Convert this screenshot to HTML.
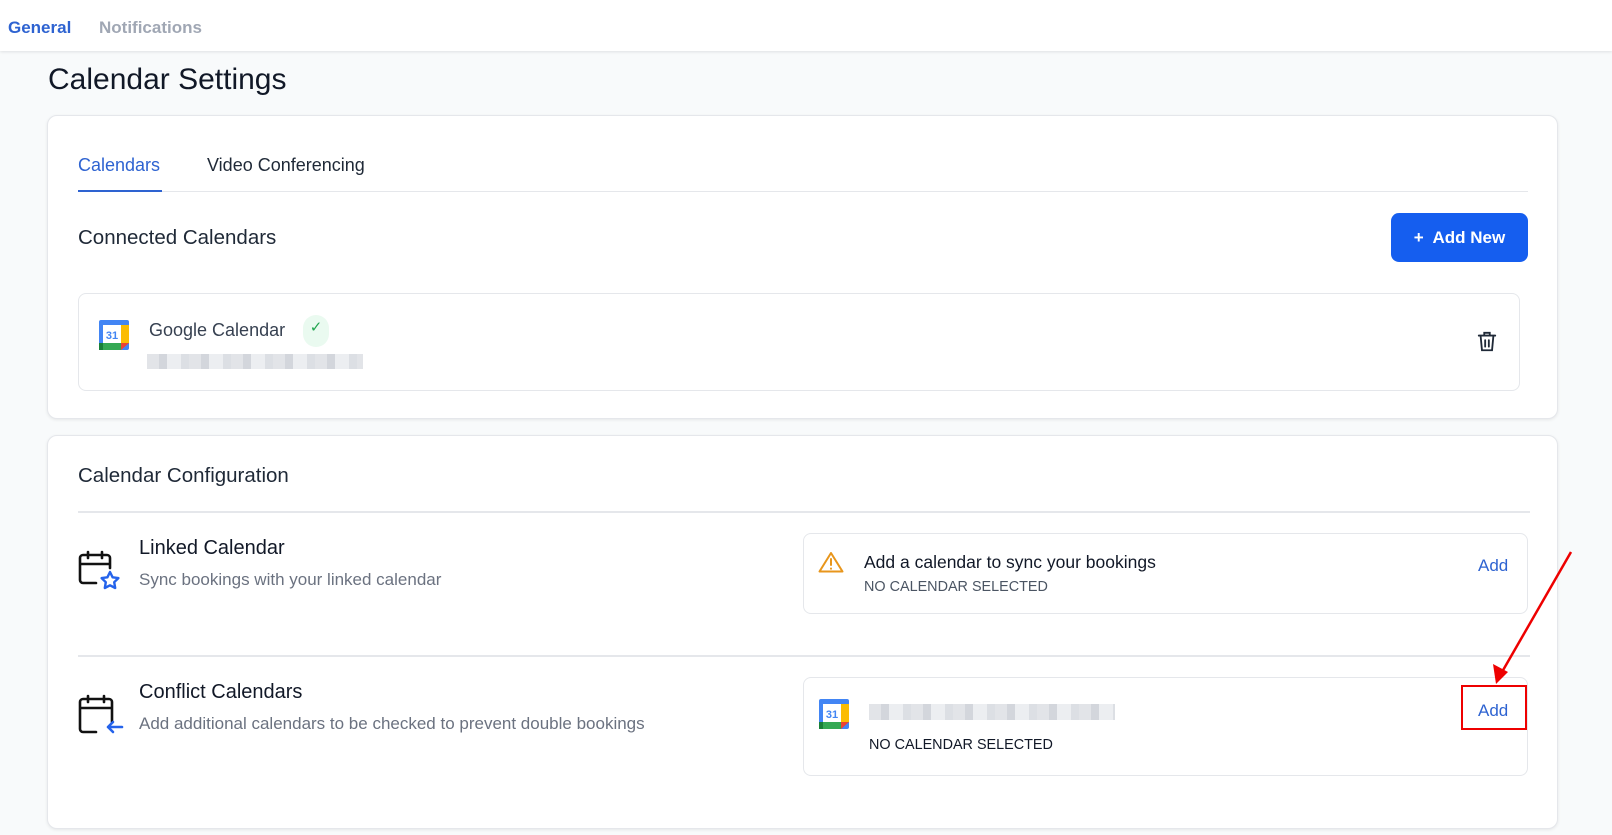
<!DOCTYPE html>
<html><head><meta charset="utf-8"><style>
*{box-sizing:border-box;margin:0;padding:0}
body{width:1612px;height:835px;background:#f8fafb;font-family:"Liberation Sans",sans-serif;position:relative;overflow:hidden;color:#111827}
.a{position:absolute;white-space:nowrap}
.card{position:absolute;background:#fff;border:1px solid #e5e7eb;border-radius:10px;box-shadow:0 1px 3px rgba(0,0,0,.08)}
.box{position:absolute;background:#fff;border:1px solid #e5e7eb;border-radius:8px}
.blur{position:absolute;background:repeating-linear-gradient(90deg,#e2e4e8 0 12px,#d3d6dc 12px 20px,#eceef1 20px 34px,#dcdfe4 34px 42px)}
</style></head><body>
<div class="a" style="left:0;top:0;width:1612px;height:51px;background:#fff;box-shadow:0 1px 3px rgba(0,0,0,.1)"></div>
<div class="a" style="left:8px;top:18px;font-size:17px;font-weight:bold;color:#2e63d1">General</div>
<div class="a" style="left:99px;top:18px;font-size:17px;font-weight:bold;color:#a0a7b4">Notifications</div>
<div class="a" style="left:48px;top:63px;font-size:30px;color:#111827">Calendar Settings</div>

<div class="card" style="left:47px;top:115px;width:1511px;height:304px"></div>
<div class="a" style="left:78px;top:155px;font-size:18px;color:#2e63d1">Calendars</div>
<div class="a" style="left:207px;top:155px;font-size:18px;color:#1f2937">Video Conferencing</div>
<div class="a" style="left:78px;top:191px;width:1450px;height:1px;background:#e5e7eb"></div>
<div class="a" style="left:78px;top:190px;width:84px;height:2px;background:#2e63d1"></div>
<div class="a" style="left:78px;top:226px;font-size:20.5px;color:#1f2937">Connected Calendars</div>
<div class="a" style="left:1391px;top:213px;width:137px;height:49px;background:#155eef;border-radius:8px;color:#fff;font-size:17px;font-weight:bold;line-height:49px;text-align:center">+&nbsp; Add New</div>
<div class="box" style="left:78px;top:293px;width:1442px;height:98px"></div>
<svg class="a" style="left:99px;top:320px" width="30" height="30" viewBox="0 0 30 30"><rect x="0" y="0" width="30" height="30" rx="2" fill="#4285f4"/><rect x="4" y="5" width="18" height="18" fill="#fff"/><rect x="22" y="5" width="8" height="18" fill="#fbbc04"/><rect x="0" y="23" width="22" height="7" fill="#34a853"/><rect x="0" y="23" width="4" height="7" fill="#188038"/><polygon points="22,23 30,23 22,30" fill="#ea4335"/><text x="13" y="19" font-size="11" font-weight="bold" fill="#4285f4" text-anchor="middle" font-family="Liberation Sans">31</text></svg>
<div class="a" style="left:149px;top:320px;font-size:18px;color:#374151">Google Calendar</div>
<div class="a" style="left:303px;top:315px;width:26px;height:32px;border-radius:13px;background:#eafaf0;color:#22a550;font-size:15px;text-align:center;line-height:26px">✓</div>
<div class="blur" style="left:147px;top:354px;width:216px;height:15px"></div>
<svg class="a" style="left:1476px;top:331px" width="22" height="22" viewBox="0 0 22 24" fill="none" stroke="#1f2937" stroke-width="2" stroke-linecap="round"><path d="M2 5h18M8 5V2h6v3M4 5l1.5 16h11L18 5M9 10v7M13 10v7"/></svg>

<div class="card" style="left:47px;top:435px;width:1511px;height:394px"></div>
<div class="a" style="left:78px;top:464px;font-size:20.5px;color:#1f2937">Calendar Configuration</div>
<div class="a" style="left:78px;top:511px;width:1452px;height:2px;background:#e5e7eb"></div>
<svg class="a" style="left:78px;top:550px" width="46" height="42" viewBox="0 0 46 42" fill="none" stroke-linecap="round" stroke-linejoin="round"><path d="M18 33H5a3 3 0 0 1-3-3V8a3 3 0 0 1 3-3h24a3 3 0 0 1 3 3v10M2 14h30M10 2v6M24 2v6" stroke="#111" stroke-width="2.6"/><path d="M32 22l2.6 5.3 5.8.8-4.2 4.1 1 5.8-5.2-2.7-5.2 2.7 1-5.8-4.2-4.1 5.8-.8z" stroke="#2563eb" stroke-width="2.4"/></svg>
<div class="a" style="left:139px;top:537px;font-size:20px;color:#111827">Linked Calendar</div>
<div class="a" style="left:139px;top:570px;font-size:17px;color:#6b7280">Sync bookings with your linked calendar</div>
<div class="box" style="left:803px;top:533px;width:725px;height:81px"></div>
<svg class="a" style="left:818px;top:551px" width="26" height="22" viewBox="0 0 26 22" fill="none" stroke="#e8961c" stroke-width="2" stroke-linecap="round" stroke-linejoin="round"><path d="M13 2L1.5 20.5h23z"/><path d="M13 8v6M13 17.5v.2"/></svg>
<div class="a" style="left:864px;top:552px;font-size:17.5px;color:#111827">Add a calendar to sync your bookings</div>
<div class="a" style="left:864px;top:579px;font-size:14.4px;color:#4b5563">NO CALENDAR SELECTED</div>
<div class="a" style="left:1478px;top:556px;font-size:17px;color:#2e63d1">Add</div>
<div class="a" style="left:78px;top:655px;width:1452px;height:2px;background:#e5e7eb"></div>
<svg class="a" style="left:78px;top:694px" width="46" height="42" viewBox="0 0 46 42" fill="none" stroke-linecap="round" stroke-linejoin="round"><path d="M18 38H5a3 3 0 0 1-3-3V8a3 3 0 0 1 3-3h26a3 3 0 0 1 3 3v20M2 14h32M10 2v6M26 2v6" stroke="#111" stroke-width="2.6"/><path d="M44 33H30M35 28l-5 5 5 5" stroke="#2563eb" stroke-width="2.6"/></svg>
<div class="a" style="left:139px;top:681px;font-size:20px;color:#111827">Conflict Calendars</div>
<div class="a" style="left:139px;top:714px;font-size:17px;color:#6b7280">Add additional calendars to be checked to prevent double bookings</div>
<div class="box" style="left:803px;top:677px;width:725px;height:99px"></div>
<svg class="a" style="left:819px;top:699px" width="30" height="30" viewBox="0 0 30 30"><rect x="0" y="0" width="30" height="30" rx="2" fill="#4285f4"/><rect x="4" y="5" width="18" height="18" fill="#fff"/><rect x="22" y="5" width="8" height="18" fill="#fbbc04"/><rect x="0" y="23" width="22" height="7" fill="#34a853"/><rect x="0" y="23" width="4" height="7" fill="#188038"/><polygon points="22,23 30,23 22,30" fill="#ea4335"/><text x="13" y="19" font-size="11" font-weight="bold" fill="#4285f4" text-anchor="middle" font-family="Liberation Sans">31</text></svg>
<div class="blur" style="left:869px;top:704px;width:246px;height:16px"></div>
<div class="a" style="left:869px;top:737px;font-size:14.4px;color:#111827">NO CALENDAR SELECTED</div>
<div class="a" style="left:1478px;top:701px;font-size:17px;color:#2e63d1">Add</div>
<div class="a" style="left:1461px;top:685px;width:66px;height:45px;border:2.5px solid #e00"></div>
<svg class="a" style="left:0;top:0" width="1612" height="835"><line x1="1571" y1="552" x2="1502" y2="672" stroke="#e00" stroke-width="2.5"/><polygon points="1496,684 1493,664 1508,672" fill="#e00"/></svg>
</body></html>
